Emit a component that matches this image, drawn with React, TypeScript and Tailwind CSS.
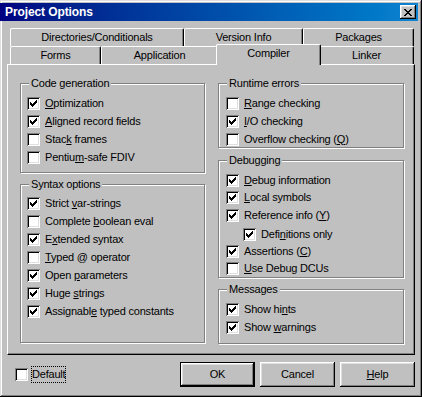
import React from "react";

type Item = { label: string; checked: boolean; h?: string; indent?: boolean };

const codeGen: Item[] = [
  { label: "&Optimization", checked: true },
  { label: "&Aligned record fields", checked: true },
  { label: "Stac&k frames", checked: false },
  { label: "Pentiu&m-safe FDIV", checked: false },
];

const syntax: Item[] = [
  { label: "Strict &var-strings", checked: true },
  { label: "Complete &boolean eval", checked: false },
  { label: "E&xtended syntax", checked: true },
  { label: "&Typed @ operator", checked: false },
  { label: "Open &parameters", checked: true },
  { label: "Huge &strings", checked: true },
  { label: "Assignabl&e typed constants", checked: true },
];

const runtime: Item[] = [
  { label: "&Range checking", checked: false },
  { label: "&I/O checking", checked: true },
  { label: "Overflow checking (&Q)", checked: false },
];

const debugging: Item[] = [
  { label: "&Debug information", checked: true, h: "h-[18px]" },
  { label: "&Local symbols", checked: true, h: "h-[17px]" },
  { label: "Reference info (&Y)", checked: true, h: "h-[19px]" },
  { label: "Defi&nitions only", checked: true, h: "h-[18px]", indent: true },
  { label: "Assertions (&C)", checked: true, h: "h-[16px]" },
  { label: "&Use Debug DCUs", checked: false, h: "h-[18px]" },
];

const messages: Item[] = [
  { label: "Show hi&nts", checked: true },
  { label: "Show &warnings", checked: true },
];

// "&" marks the mnemonic letter
function Mnemonic({ text }: { text: string }) {
  const i = text.indexOf("&");
  if (i < 0) return <>{text}</>;
  return (
    <>
      {text.slice(0, i)}
      <u>{text[i + 1]}</u>
      {text.slice(i + 2)}
    </>
  );
}

function Box({ checked }: { checked: boolean }) {
  return (
    <span className="block h-[13px] w-[13px] shrink-0 bg-white p-[3px] shadow-[inset_1px_1px_#808080,inset_-1px_-1px_#fff,inset_2px_2px_#000,inset_-2px_-2px_#dfdfdf]">
      {checked && (
        <svg width="7" height="7" viewBox="0 0 7 7" shapeRendering="crispEdges" className="block">
          <path
            d="M6 0h1v1H6zM5 1h2v1H5zM0 2h1v1H0zM4 2h3v1H4zM0 3h2v1H0zM3 3h3v1H3zM0 4h5v1H0zM1 5h3v1H1zM2 6h1v1H2z"
            fill="#000"
          />
        </svg>
      )}
    </span>
  );
}

function Check({ item }: { item: Item }) {
  return (
    <div className={`flex items-center gap-[5px] ${item.h ?? "h-[18px]"} ${item.indent ? "ml-[17px]" : ""}`}>
      <Box checked={item.checked} />
      <span className="whitespace-nowrap">
        <Mnemonic text={item.label} />
      </span>
    </div>
  );
}

function Group({ title, items, className }: { title: string; items: Item[]; className: string }) {
  return (
    <div className={`relative border border-[#808080] shadow-[inset_1px_1px_#fff,1px_1px_#fff] ${className}`}>
      <span className="absolute -top-[7px] left-[8px] bg-[#c0c0c0] px-[2px] leading-[13px]">{title}</span>
      {items.map((it) => (
        <Check key={it.label} item={it} />
      ))}
    </div>
  );
}

function Tab({ label, className, selected }: { label: string; className: string; selected?: boolean }) {
  return (
    <div
      className={`flex items-center justify-center rounded-tl-[2px] rounded-tr-[2px] border-t border-r border-l border-t-white border-r-black border-l-white bg-[#c0c0c0] shadow-[inset_-1px_0_#808080] ${className} ${
        selected ? "relative z-10 -mx-[2px] -mb-px h-[21px] pb-[3px]" : "h-[18px]"
      }`}
    >
      {label}
    </div>
  );
}

function Button({ label, isDefault }: { label: React.ReactNode; isDefault?: boolean }) {
  const face =
    "flex items-center justify-center bg-[#c0c0c0] shadow-[inset_-1px_-1px_#000,inset_1px_1px_#fff,inset_-2px_-2px_#808080,inset_2px_2px_#dfdfdf]";
  if (isDefault) {
    return (
      <div className="h-[25px] w-[75px] border border-black">
        <div className={`h-full w-full ${face}`}>{label}</div>
      </div>
    );
  }
  return <div className={`h-[25px] w-[75px] ${face}`}>{label}</div>;
}

export default function App() {
  return (
    <div className="h-[397px] w-[422px] bg-[#c0c0c0] pt-[3px] pr-[4px] pb-[3px] font-['Liberation_Sans',Arial,sans-serif] text-[11px] leading-[13px] tracking-[-0.2px] text-black shadow-[inset_-1px_-1px_#000,inset_1px_1px_#dfdfdf,inset_-2px_-2px_#808080,inset_2px_2px_#fff]">
      {/* title bar */}
      <div className="flex h-[18px] items-center bg-linear-to-r from-[#000080] to-[#1084d0] pl-[5px]">
        <span className="text-[12px] font-bold tracking-[-0.1px] text-white">Project Options</span>
        <div className="mr-[2px] ml-auto flex h-[14px] w-[16px] items-center justify-center bg-[#c0c0c0] shadow-[inset_-1px_-1px_#000,inset_1px_1px_#fff,inset_-2px_-2px_#808080,inset_2px_2px_#dfdfdf]">
          <svg width="8" height="7" viewBox="0 0 8 7" shapeRendering="crispEdges" className="block">
            <path
              d="M0 0h2v1H0zM6 0h2v1H6zM1 1h2v1H1zM5 1h2v1H5zM2 2h4v1H2zM3 3h2v1H3zM2 4h4v1H2zM1 5h2v1H1zM5 5h2v1H5zM0 6h2v1H0zM6 6h2v1H6z"
              fill="#000"
            />
          </svg>
        </div>
      </div>

      {/* tabs */}
      <div className="mt-[7px] ml-[10px] flex">
        <Tab label="Directories/Conditionals" className="w-[174px]" />
        <Tab label="Version Info" className="w-[119px]" />
        <Tab label="Packages" className="w-[111px]" />
      </div>
      <div className="ml-[10px] flex h-[18px] items-end">
        <Tab label="Forms" className="w-[91px]" />
        <Tab label="Application" className="w-[117px]" />
        <Tab label="Compiler" className="w-[105px]" selected />
        <Tab label="Linker" className="w-[95px]" />
      </div>

      {/* page */}
      <div className="ml-[7px] flex h-[291px] w-[408px] border-t border-r border-b border-l border-t-white border-r-black border-b-black border-l-white shadow-[inset_-1px_-1px_#808080]">
        <div className="ml-[12px] flex flex-col pt-[18px]">
          <Group title="Code generation" items={codeGen} className="h-[90px] w-[185px] pt-[10px] pl-[6px]" />
          <Group title="Syntax options" items={syntax} className="mt-[11px] h-[159px] w-[185px] pt-[9px] pl-[6px]" />
        </div>
        <div className="ml-[13px] flex flex-col pt-[18px]">
          <Group title="Runtime errors" items={runtime} className="h-[65px] w-[186px] pt-[10px] pl-[7px]" />
          <Group title="Debugging" items={debugging} className="mt-[12px] h-[118px] w-[186px] pt-[10px] pl-[7px]" />
          <Group title="Messages" items={messages} className="mt-[11px] h-[55px] w-[186px] pt-[10px] pl-[7px]" />
        </div>
      </div>

      {/* bottom row */}
      <div className="mt-[7px] flex h-[25px] items-center pr-[3px] pl-[15px]">
        <Box checked={false} />
        <span className="ml-[3px] border border-dotted border-black pb-px leading-[14px]">Default</span>
        <div className="ml-auto flex gap-[5px]">
          <Button label="OK" isDefault />
          <Button label="Cancel" />
          <Button label={<Mnemonic text="&Help" />} />
        </div>
      </div>
    </div>
  );
}
